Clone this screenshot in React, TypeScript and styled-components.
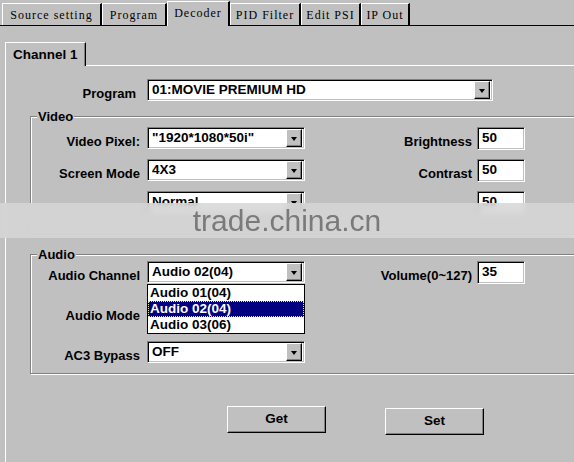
import React from 'react';
import styled, { createGlobalStyle, css } from 'styled-components';

const GlobalStyle = createGlobalStyle`
  html, body {
    margin: 0;
    padding: 0;
    background: #c0c0c0;
  }
  body {
    font-family: "Liberation Sans", Arial, sans-serif;
  }
`;

const Screen = styled.div`
  position: relative;
  width: 574px;
  height: 462px;
  overflow: hidden;
  background: #c0c0c0;
  color: #000;
`;

const TabStrip = styled.div`
  display: flex;
  align-items: flex-end;
  height: 25px;
  padding-left: 2px;
  border-bottom: 1px solid #000;
`;

const Tab = styled.div<{ $w: number; $active?: boolean }>`
  box-sizing: border-box;
  width: ${({ $w }) => $w}px;
  height: 22px;
  display: flex;
  align-items: center;
  justify-content: center;
  padding-top: 1px;
  background: #c0c0c0;
  border-top: 1px solid #fff;
  border-left: 1px solid #fff;
  border-right: 2px solid #000;
  font: 12px "Liberation Serif", "Times New Roman", serif;
  letter-spacing: 1px;
  white-space: pre;
  ${({ $active }) => $active && css`
    position: relative;
    height: 25px;
    margin-bottom: -1px;
    padding-bottom: 2px;
  `}
`;

const Page = styled.div`
  padding: 16px 0 0 5px;
`;

const ChannelTab = styled.div`
  position: relative;
  z-index: 1;
  box-sizing: border-box;
  width: 81px;
  height: 24px;
  margin-bottom: -1px;
  padding: 4px 0 0 7px;
  background: #c0c0c0;
  border-top: 1px solid #fff;
  border-left: 1px solid #fff;
  border-right: 1px solid #000;
  box-shadow: inset -1px 0 0 #808080;
  font: bold 13.5px "Liberation Sans", Arial, sans-serif;
`;

const ChannelBody = styled.div`
  width: 640px;
  height: 420px;
  padding-top: 13px;
  border-top: 1px solid #fff;
  border-left: 1px solid #fff;
`;

const Row = styled.div`
  display: flex;
  align-items: center;
  height: 22px;
`;

const Label = styled.div<{ $w: number; $gap: number }>`
  flex-shrink: 0;
  width: ${({ $w }) => $w}px;
  margin-right: ${({ $gap }) => $gap}px;
  padding-top: 6px;
  text-align: right;
  white-space: nowrap;
  font: bold 13px "Liberation Sans", Arial, sans-serif;
`;

const Group = styled.div<{ $top: number; $pt: number; $pb: number; $gap: number }>`
  position: relative;
  display: flex;
  flex-direction: column;
  gap: ${({ $gap }) => $gap}px;
  margin: ${({ $top }) => $top}px 0 0 24px;
  padding: ${({ $pt }) => $pt}px 0 ${({ $pb }) => $pb}px;
  border: 1px solid #808080;
  box-shadow: inset 1px 1px 0 #fff, 1px 1px 0 #fff;
`;

const Caption = styled.span`
  position: absolute;
  top: -8px;
  left: 6px;
  padding: 0 1px;
  background: #c0c0c0;
  font: bold 13px/15px "Liberation Sans", Arial, sans-serif;
`;

const sunken = css`
  box-sizing: border-box;
  background: #fff;
  border: 1px solid;
  border-color: #808080 #fff #fff #808080;
  box-shadow: inset 1px 1px 0 #000, inset -1px -1px 0 #c0c0c0;
  font: bold 13.5px "Liberation Sans", Arial, sans-serif;
`;

const Combo = styled.div<{ $w: number }>`
  ${sunken};
  position: relative;
  flex-shrink: 0;
  display: flex;
  align-items: center;
  width: ${({ $w }) => $w}px;
  height: 22px;
  padding: 0 2px 0 4px;
`;

const ComboValue = styled.span`
  flex: 1;
  white-space: nowrap;
  overflow: hidden;
  padding-bottom: 1px;
`;

const DropButton = styled.span`
  box-sizing: border-box;
  display: flex;
  align-items: center;
  justify-content: center;
  width: 16px;
  height: 18px;
  background: #c0c0c0;
  border: 1px solid;
  border-color: #fff #000 #000 #fff;
  box-shadow: inset -1px -1px 0 #808080;

  &::after {
    content: '';
    border-top: 4px solid #000;
    border-left: 3.5px solid transparent;
    border-right: 3.5px solid transparent;
    margin-top: 1px;
  }
`;

const TextBox = styled.div`
  ${sunken};
  flex-shrink: 0;
  width: 48px;
  height: 23px;
  padding: 2px 0 0 4px;
`;

const ListBox = styled.ul`
  position: absolute;
  z-index: 2;
  top: 100%;
  left: -1px;
  box-sizing: border-box;
  width: 158px;
  margin: 2px 0 0;
  padding: 0;
  list-style: none;
  background: #fff;
  border: 1px solid #000;
`;

const Option = styled.li<{ $sel?: boolean }>`
  box-sizing: border-box;
  height: 16px;
  padding-left: 2px;
  font: bold 13.5px/16px "Liberation Sans", Arial, sans-serif;
  ${({ $sel }) => $sel && css`
    background: #000080;
    color: #fff;
    outline: 1px dotted #e8e8a0;
    outline-offset: -1px;
  `}
`;

const ButtonRow = styled.div`
  display: flex;
  align-items: flex-start;
  gap: 59px;
  margin-top: 32px;
  padding-left: 221px;
`;

const Button = styled.button<{ $drop?: number }>`
  box-sizing: border-box;
  width: 99px;
  height: 27px;
  margin-top: ${({ $drop }) => $drop ?? 0}px;
  padding: 0 0 2px;
  background: #c0c0c0;
  border: 1px solid;
  border-color: #fff #000 #000 #fff;
  box-shadow: inset -1px -1px 0 #808080;
  color: #000;
  font: bold 13.5px "Liberation Sans", Arial, sans-serif;
`;

const Watermark = styled.div`
  position: absolute;
  top: 203px;
  left: 0;
  right: 0;
  height: 35px;
  background: rgba(214, 214, 214, 0.85);
  backdrop-filter: blur(3px);
  text-align: center;
  color: #7a7a7a;
  font: 30px/35px "Liberation Sans", Arial, sans-serif;
`;

const Spacer = styled.div<{ $w: number }>`
  flex-shrink: 0;
  width: ${({ $w }) => $w}px;
`;

const tabs = [
  { name: 'Source setting', w: 100 },
  { name: 'Program', w: 65 },
  { name: 'Decoder', w: 63, active: true },
  { name: 'PID Filter', w: 71 },
  { name: 'Edit PSI', w: 60 },
  { name: 'IP Out', w: 49 },
];

function Select({ value, w = 158, children }: { value: string; w?: number; children?: React.ReactNode }) {
  return (
    <Combo $w={w}>
      <ComboValue>{value}</ComboValue>
      <DropButton />
      {children}
    </Combo>
  );
}

function FieldRow({ label, value, side, sideValue, children }: {
  label: string; value: string; side?: string; sideValue?: string; children?: React.ReactNode;
}) {
  return (
    <Row>
      <Label $w={109} $gap={7}>{label}</Label>
      <Select value={value}>{children}</Select>
      {sideValue !== undefined ? (
        <>
          <Label $w={167} $gap={5}>{side}</Label>
          <TextBox>{sideValue}</TextBox>
        </>
      ) : <Spacer $w={220} />}
    </Row>
  );
}

export default function App() {
  return (
    <Screen>
      <GlobalStyle />
      <TabStrip>
        {tabs.map((t) => (
          <Tab key={t.name} $w={t.w} $active={t.active}>{t.name}</Tab>
        ))}
      </TabStrip>
      <Page>
        <ChannelTab>Channel 1</ChannelTab>
        <ChannelBody>
          <Row>
            <Label $w={130} $gap={11}>Program</Label>
            <Select value="01:MOVIE PREMIUM HD" w={346} />
          </Row>
          <Group $top={15} $pt={10} $pb={21} $gap={10}>
            <Caption>Video</Caption>
            <FieldRow label="Video Pixel:" value={'"1920*1080*50i"'} side="Brightness" sideValue="50" />
            <FieldRow label="Screen Mode" value="4X3" side="Contrast" sideValue="50" />
            <FieldRow label="" value="Normal" side="" sideValue="50" />
          </Group>
          <Group $top={19} $pt={6} $pb={10} $gap={18}>
            <Caption>Audio</Caption>
            <FieldRow label="Audio Channel" value="Audio 02(04)" side="Volume(0~127)" sideValue="35">
              <ListBox>
                <Option>Audio 01(04)</Option>
                <Option $sel>Audio 02(04)</Option>
                <Option>Audio 03(06)</Option>
              </ListBox>
            </FieldRow>
            <FieldRow label="Audio Mode" value="" />
            <FieldRow label="AC3 Bypass" value="OFF" />
          </Group>
          <ButtonRow>
            <Button>Get</Button>
            <Button $drop={2}>Set</Button>
          </ButtonRow>
        </ChannelBody>
      </Page>
      <Watermark>trade.china.cn</Watermark>
    </Screen>
  );
}
